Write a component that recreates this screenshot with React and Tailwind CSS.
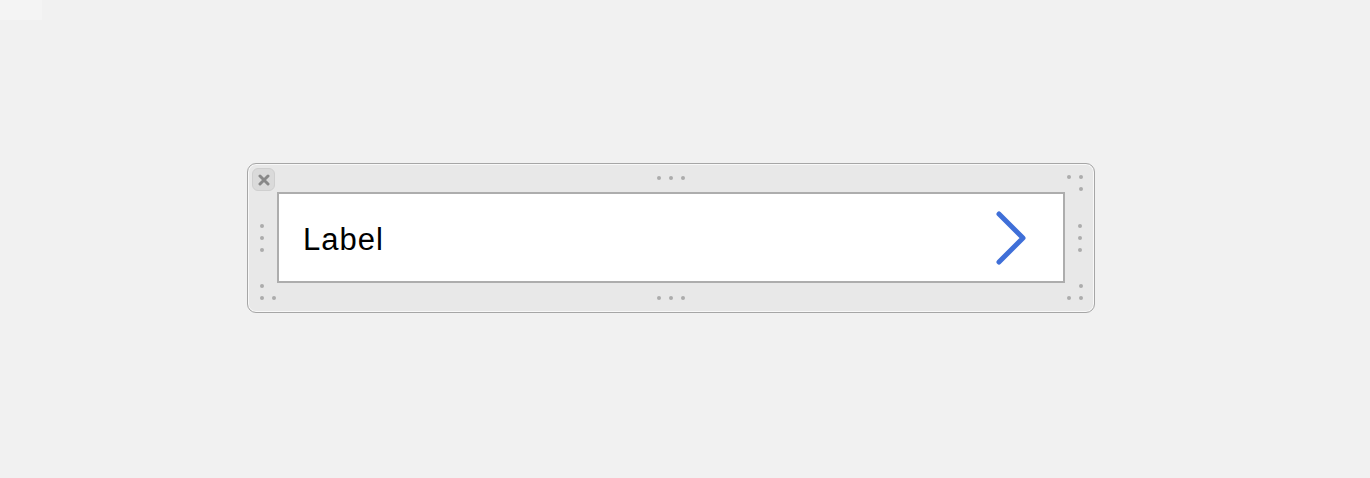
import React from "react";

function Dot() {
  return <span className="block h-[4px] w-[4px] rounded-full bg-[#acacac]" />;
}

// 2x2 dot block, `hide` is the index of the empty slot
function CornerDots({ hide }) {
  return (
    <div className="grid grid-cols-[4px_4px] grid-rows-[4px_4px] gap-[8px]">
      {[0, 1, 2, 3].map((i) => (i === hide ? <span key={i} /> : <Dot key={i} />))}
    </div>
  );
}

function CloseButton() {
  return (
    <div className="flex h-[23px] w-[23px] items-center justify-center rounded-[6px] border border-[#cfcfcf] bg-[#dadada]">
      <svg width="12" height="12" viewBox="0 0 12 12">
        <path d="M2 2 L10 10 M10 2 L2 10" stroke="#888888" strokeWidth="3" strokeLinecap="round" />
      </svg>
    </div>
  );
}

function Chevron() {
  return (
    <svg width="32" height="54" viewBox="0 0 32 54" fill="none">
      <path d="M4 3 L28 27 L4 51" stroke="#3f6fd8" strokeWidth="5" strokeLinecap="round" strokeLinejoin="round" />
    </svg>
  );
}

export default function App() {
  return (
    <div className="h-[478px] w-full overflow-hidden bg-[#f1f1f1]" style={{ fontFamily: '"Liberation Sans", Arial, sans-serif' }}>
      <div className="h-[20px] w-[42px] bg-[#f4f4f4]" />
      <div className="pl-[247px] pt-[143px]">
        <div className="grid h-[150px] w-[848px] grid-cols-[29px_1fr_29px] grid-rows-[28px_1fr_29px] rounded-[9px] border border-[#a6a6a6] bg-[#e8e8e8] shadow-[inset_0_0_0_1px_rgba(255,255,255,0.7)]">
          {/* top row */}
          <div className="pl-[4px] pt-[4px]">
            <CloseButton />
          </div>
          <div className="flex items-center justify-center gap-[8px]">
            <Dot />
            <Dot />
            <Dot />
          </div>
          <div className="pl-[2px] pt-[11px]">
            <CornerDots hide={2} />
          </div>

          {/* middle row */}
          <div className="flex flex-col items-center justify-center gap-[8px] pr-[1px]">
            <Dot />
            <Dot />
            <Dot />
          </div>
          <div className="flex items-center justify-between border-2 border-[#adadad] bg-white pl-[24px] pr-[36px]">
            <span className="pt-[3px] text-[31px] leading-none tracking-[1px] text-black">Label</span>
            <Chevron />
          </div>
          <div className="flex flex-col items-center justify-center gap-[8px]">
            <Dot />
            <Dot />
            <Dot />
          </div>

          {/* bottom row */}
          <div className="pl-[12px] pt-[1px]">
            <CornerDots hide={1} />
          </div>
          <div className="flex items-center justify-center gap-[8px]">
            <Dot />
            <Dot />
            <Dot />
          </div>
          <div className="pl-[2px] pt-[1px]">
            <CornerDots hide={0} />
          </div>
        </div>
      </div>
    </div>
  );
}
